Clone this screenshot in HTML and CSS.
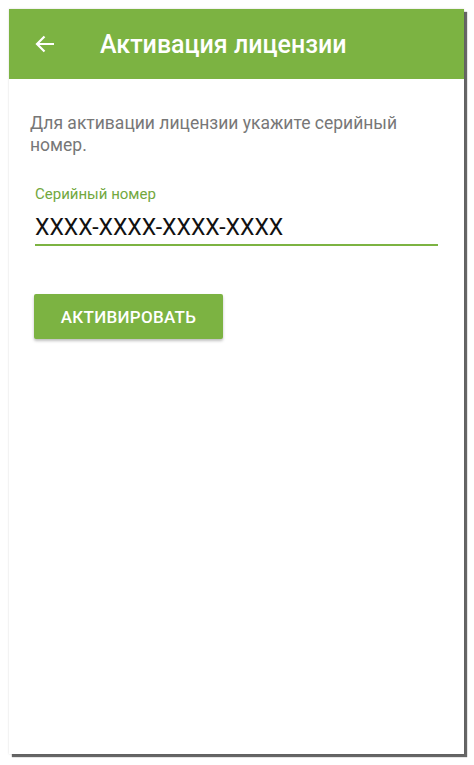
FILE: index.html
```html
<!DOCTYPE html>
<html>
	<head>
		<meta charset="UTF-8">
		<title>Активация лицензии</title>
		<link rel="stylesheet" href="styles.css">
	</head>
	<body>
		<div class="screen">
			<div class="toolbar">
				<div class="btn-back">
					<svg width="20" height="18" viewBox="0 0 20 18">
						<path d="M19 9H2M9.5 1.5L2 9l7.5 7.5" fill="none" stroke="#fff" stroke-width="2.2" />
					</svg>
				</div>
				<h1 class="title">Активация лицензии</h1>
			</div>
			<div class="content">
				<p class="hint">Для активации лицензии укажите серийный номер.</p>
				<div class="field">
					<label class="field-label">Серийный номер</label>
					<div class="field-input">XXXX-XXXX-XXXX-XXXX</div>
				</div>
				<div class="btn-activate">АКТИВИРОВАТЬ</div>
			</div>
		</div>
	</body>
</html>
```

FILE: styles.css
```css
body{
	margin: 0;
	padding: 9px 0 10px 9px;
	background-color: #fff;
	font-family: Roboto, "Noto Sans", sans-serif;
}
.screen{
	width: 455px;
	height: 745px;
	background-color: #fff;
	box-shadow: 3px 3px 1px rgba(0, 0, 0, 0.6), 0 0 2px rgba(0, 0, 0, 0.15);
}
.toolbar{
	height: 70px;
	background-color: #7cb342;
	display: flex;
	align-items: center;
	padding-left: 26px;
}
.btn-back{
	width: 20px;
	height: 18px;
	display: flex;
}
.title{
	margin: 0 0 0 45px;
	color: #fff;
	font-size: 25px;
	font-weight: 500;
}
.content{
	padding: 33px 26px 0 21px;
}
.hint{
	margin: 0;
	color: #777;
	font-size: 17.5px;
	line-height: 22px;
	width: 400px;
}
.field{
	margin: 29px 0 0 5px;
}
.field-label{
	display: block;
	color: #72a83e;
	font-size: 15px;
	line-height: 18px;
}
.field-input{
	margin-top: 11px;
	color: #111;
	font-size: 23px;
	line-height: 28px;
	padding-bottom: 2px;
	border-bottom: 2px solid #7cb342;
}
.btn-activate{
	margin: 48px 0 0 4px;
	width: 189px;
	height: 45px;
	background-color: #7cb342;
	border-radius: 2px;
	box-shadow: 0 2px 3px rgba(0, 0, 0, 0.25);
	color: #fff;
	font-size: 17px;
	font-weight: 500;
	letter-spacing: 0.3px;
	display: flex;
	align-items: center;
	justify-content: center;
}
```
